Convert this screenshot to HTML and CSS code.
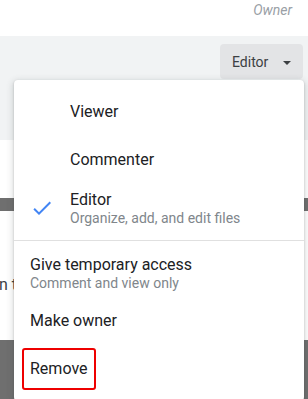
FILE: index.html
```html
<!DOCTYPE html>
<html>
<head>
	<title>share - role menu</title>
	<link rel="stylesheet" href="styles.css">
</head>
<body>
	<div class="head">
		<span class="owner">Owner</span>
	</div>
	<div class="band">
		<div class="role-btn">
			Editor
			<span class="caret"></span>
		</div>
	</div>
	<div class="gap"></div>
	<div class="bar"></div>
	<div class="row">
		<span class="behind">n th</span>
	</div>
	<div class="foot"></div>

	<div class="menu">
		<div class="item">
			<span class="tick"></span>
			<div class="label">Viewer</div>
		</div>
		<div class="item">
			<span class="tick"></span>
			<div class="label">Commenter</div>
		</div>
		<div class="item">
			<span class="tick">
				<svg width="24" height="24" viewBox="0 0 24 24"><path d="M9 16.17L4.83 12l-1.42 1.41L9 19 21 7l-1.41-1.41z" fill="#4285f4"/></svg>
			</span>
			<div class="label">
				Editor
				<div class="sub">Organize, add, and edit files</div>
			</div>
		</div>
		<div class="divider"></div>
		<div class="item plain">
			<div class="label">
				Give temporary access
				<div class="sub">Comment and view only</div>
			</div>
		</div>
		<div class="item plain">
			<div class="label">Make owner</div>
		</div>
		<div class="item plain">
			<div class="label"><span class="marked">Remove</span></div>
		</div>
	</div>
</body>
</html>
```

FILE: styles.css
```css
body {
	margin: 0;
	font-family: Roboto, "Liberation Sans", sans-serif;
	color: #202124;
	overflow: hidden;
	height: 399px;
}
.head {
	height: 36px;
	display: flex; justify-content: flex-end;
	padding-right: 16px;
	box-sizing: border-box;
}
.owner {
	font-size: 14px; font-style: italic;
	color: #9aa0a6;
	line-height: 18px;
	padding-top: 1px;
}
.band {
	height: 104px;
	background: #f1f3f4;
	display: flex; justify-content: flex-end; align-items: flex-start;
	padding: 8px 5px 0 0;
	box-sizing: border-box;
}
.role-btn {
	width: 83px; height: 35px;
	background: #e3e4e6;
	border-radius: 4px;
	box-sizing: border-box;
	padding-left: 12px;
	display: flex; align-items: center;
	font-size: 14px; color: #3c4043;
}
.caret {
	width: 0; height: 0;
	margin-left: 15px; margin-top: 2px;
	border-left: 4px solid transparent;
	border-right: 4px solid transparent;
	border-top: 4px solid #3c4043;
}
.gap {
	height: 58px;
}
.bar {
	height: 13px;
	background: #6f6f6f;
}
.row {
	height: 129px;
	padding-top: 64px;
	box-sizing: border-box;
	font-size: 16px; line-height: 20px;
	color: #3c4043;
	white-space: nowrap;
	overflow: hidden;
}
.behind {
	margin-left: -1px;
}
.foot {
	height: 60px;
	background: #6f6f6f;
}

/* dropdown */
.menu {
	position: absolute;
	top: 80px; left: 14px;
	width: 290px;
	padding: 8px 0;
	background: #fff;
	border-radius: 4px;
	box-shadow: 0 1px 2px 0 rgba(60,64,67,.3), 0 2px 6px 2px rgba(60,64,67,.15);
}
.item {
	height: 48px;
	display: flex; align-items: center;
	padding-left: 16px;
}
.tick {
	width: 24px; height: 24px;
	margin-right: 16px;
	display: flex;
}
.label {
	font-size: 16px; line-height: 18px;
	color: #202124;
}
.sub {
	font-size: 14px; line-height: 16px;
	color: #80868b;
	margin-top: 1px;
}
.divider {
	height: 1px;
	background: #e0e0e0;
	margin: 8px 0;
}
.marked {
	display: inline-block;
	border: 2px solid #ee0000;
	border-radius: 3px;
	padding: 10px 6px;
	margin-left: -8px;
}
```
